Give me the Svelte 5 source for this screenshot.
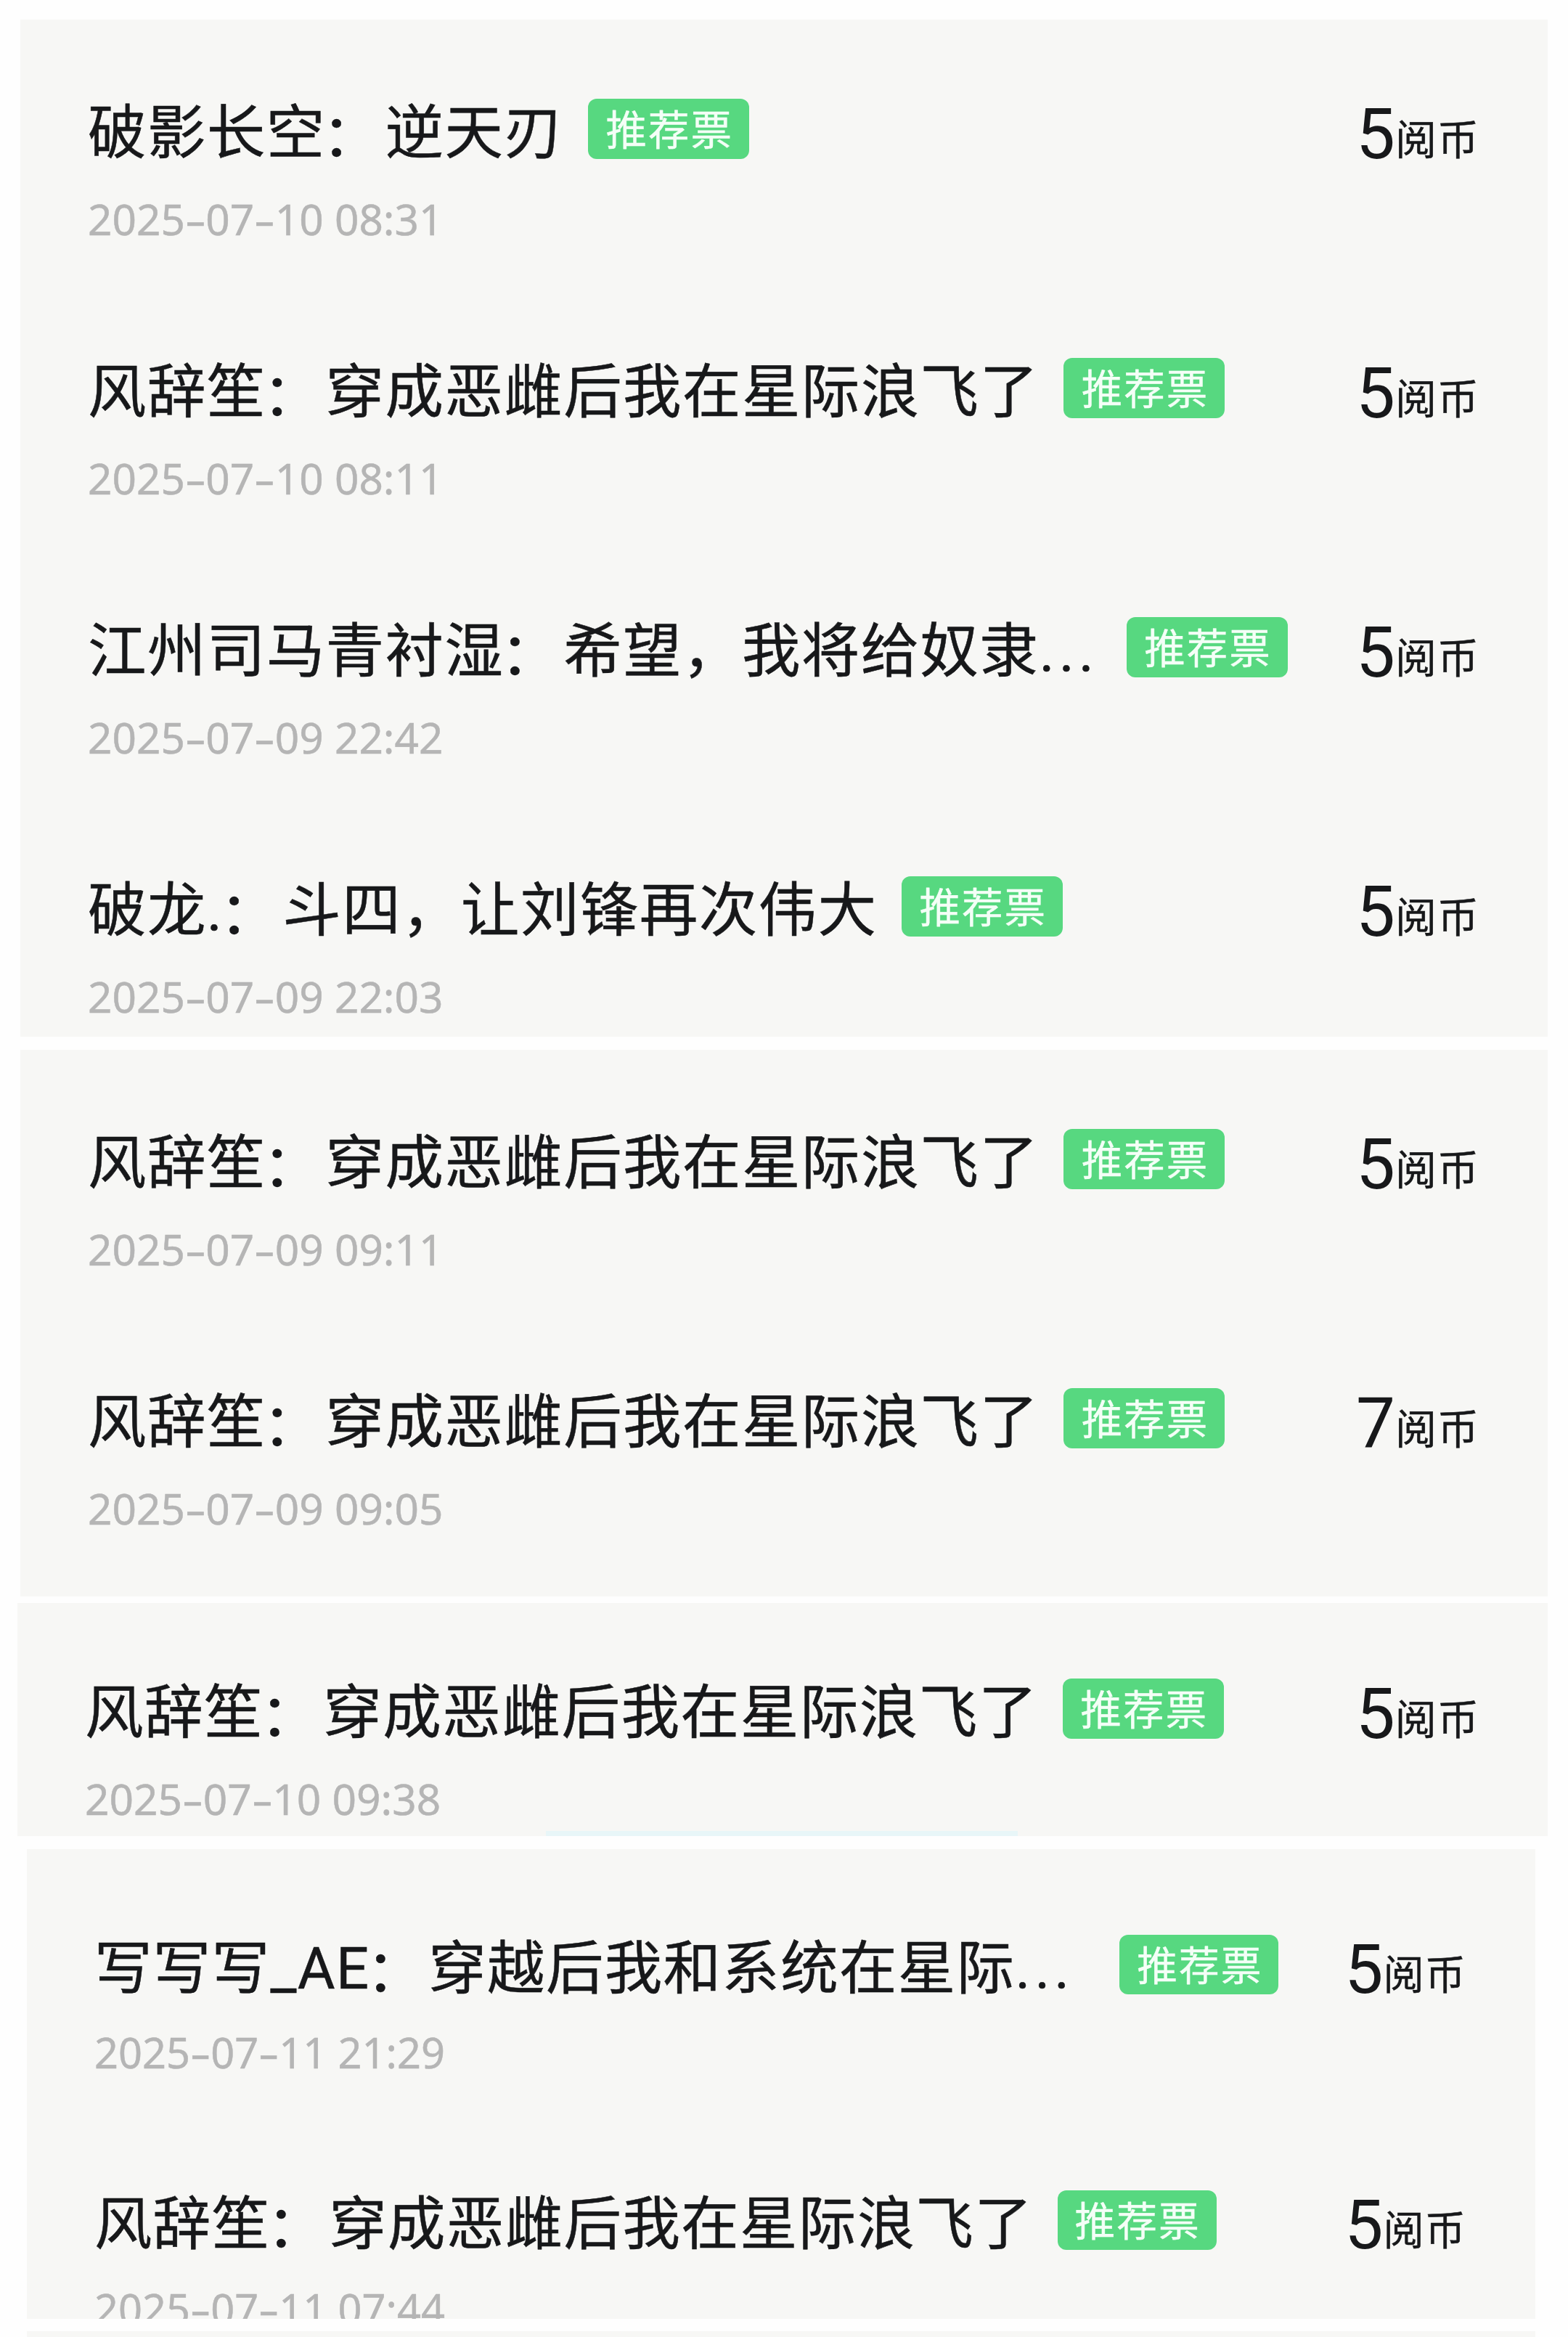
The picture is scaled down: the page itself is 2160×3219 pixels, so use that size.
<script lang="ts">
  type Entry = { title: string; clipped?: boolean; time: string; amount: number };
  type Panel = {
    id: string;
    scale: number;
    entries: Entry[];
  };

  const BADGE = "推荐票";
  const UNIT = "阅币";

  const panels: Panel[] = [
    {
      id: "first",
      scale: 1,
      entries: [
        { title: "破影长空：逆天刃", time: "2025-07-10 08:31", amount: 5 },
        { title: "风辞笙：穿成恶雌后我在星际浪飞了", time: "2025-07-10 08:11", amount: 5 },
        { title: "江州司马青衬湿：希望，我将给奴隶", clipped: true, time: "2025-07-09 22:42", amount: 5 },
        { title: "破龙.：斗四，让刘锋再次伟大", time: "2025-07-09 22:03", amount: 5 },
      ],
    },
    {
      id: "second",
      scale: 1,
      entries: [
        { title: "风辞笙：穿成恶雌后我在星际浪飞了", time: "2025-07-09 09:11", amount: 5 },
        { title: "风辞笙：穿成恶雌后我在星际浪飞了", time: "2025-07-09 09:05", amount: 7 },
      ],
    },
    {
      id: "third",
      scale: 1.002,
      entries: [
        { title: "风辞笙：穿成恶雌后我在星际浪飞了", time: "2025-07-10 09:38", amount: 5 },
      ],
    },
    {
      id: "fourth",
      scale: 0.987,
      entries: [
        { title: "写写写_AE：穿越后我和系统在星际", clipped: true, time: "2025-07-11 21:29", amount: 5 },
        { title: "风辞笙：穿成恶雌后我在星际浪飞了", time: "2025-07-11 07:44", amount: 5 },
      ],
    },
    { id: "rest", scale: 1, entries: [] },
  ];
</script>

<main class="page">
  {#each panels as panel (panel.id)}
    <section class="panel {panel.id}" style="--k: {panel.scale};">
      {#each panel.entries as entry}
        <article class="entry">
          <div class="info">
            <div class="heading">
              <div class="title" class:clipped={entry.clipped}>
                {#each entry.title.split("：") as part, i}{#if i > 0}<span class="colon">：</span>{/if}{part}{/each}{#if entry.clipped}<span class="dots">...</span>{/if}
              </div>
              <span class="badge">{BADGE}</span>
            </div>
            <div class="time">
              {#each entry.time.split("-") as part, i}{#if i > 0}<span class="dash">-</span>{/if}{part}{/each}
            </div>
          </div>
          <div class="amount">
            <span class="number">{entry.amount}</span><span class="unit">{UNIT}</span>
          </div>
        </article>
      {/each}
    </section>
  {/each}
</main>

<style>
  :global(body) {
    margin: 0;
    background: #fefefe;
  }

  .page {
    box-sizing: border-box;
    width: 2160px;
    height: 3219px;
    padding-top: 27px;
    overflow: hidden;
    background: #fefefe;
    color: #17181a;
    font-family: "Noto Sans CJK SC", sans-serif;
  }

  .panel {
    position: relative;
    box-sizing: border-box;
    overflow: hidden;
    background: #f7f7f5;
  }

  .first {
    height: 1401px;
    margin: 0 28px 18px;
    padding: 109px 94px 0 93px;
  }

  .second {
    height: 753px;
    margin: 0 28px 9px;
    padding: 109px 94px 0 93px;
  }

  .third {
    height: 321px;
    margin: 0 28px 18px 24px;
    padding: 104px 94px 0 93px;
  }

  /* top edge of the tip that peeks in below the list */
  .third::after {
    content: "";
    position: absolute;
    left: 728px;
    bottom: 0;
    width: 650px;
    height: 7px;
    background: #e8f6f8;
  }

  .fourth {
    height: 647px;
    margin: 0 45px 17px 37px;
    padding: 118px 95px 0 93px;
  }

  .rest {
    height: 8px;
    margin: 0 45px 0 37px;
  }

  .entry {
    display: flex;
    justify-content: space-between;
    align-items: flex-start;
    height: calc(357px * var(--k));
  }

  .heading {
    display: flex;
    align-items: flex-start;
    gap: calc(34px * var(--k));
    height: calc(83px * var(--k));
  }

  .title {
    font-family: Roboto, "Noto Sans CJK SC", sans-serif;
    font-size: calc(80.5px * var(--k));
    line-height: calc(96px * var(--k));
    letter-spacing: calc(1.4px * var(--k));
    white-space: nowrap;
    -webkit-text-stroke: 0.5px currentColor;
  }

  .title.clipped {
    width: calc(1397px * var(--k));
  }

  .colon {
    display: inline-block;
    transform: translate(-5px, 4px);
  }

  .dots {
    letter-spacing: 6px;
  }

  .badge {
    box-sizing: border-box;
    width: calc(222px * var(--k));
    height: calc(83px * var(--k));
    padding-left: 2px;
    border-radius: 12px;
    background: #57d880;
    color: #f4fff7;
    font-size: calc(56.5px * var(--k));
    line-height: calc(78px * var(--k));
    letter-spacing: 2px;
    text-align: center;
    white-space: nowrap;
    -webkit-text-stroke: 0.4px currentColor;
  }

  .time {
    margin-top: calc(42px * var(--k));
    color: #b5b5b5;
    font-family: "Noto Sans", sans-serif;
    font-size: calc(58.5px * var(--k));
    line-height: calc(80px * var(--k));
    white-space: nowrap;
    -webkit-text-stroke: 0.5px currentColor;
  }

  .dash {
    display: inline-block;
    width: calc(28.5px * var(--k));
    text-align: center;
    transform: scaleX(1.55);
  }

  .amount {
    display: flex;
    align-items: baseline;
    line-height: calc(88px * var(--k));
    white-space: nowrap;
  }

  .number {
    font-family: Roboto, sans-serif;
    font-size: calc(96px * var(--k));
    transform: translateY(5px);
  }

  .unit {
    font-size: calc(57px * var(--k));
    letter-spacing: 1px;
    -webkit-text-stroke: 0.4px currentColor;
  }
</style>
